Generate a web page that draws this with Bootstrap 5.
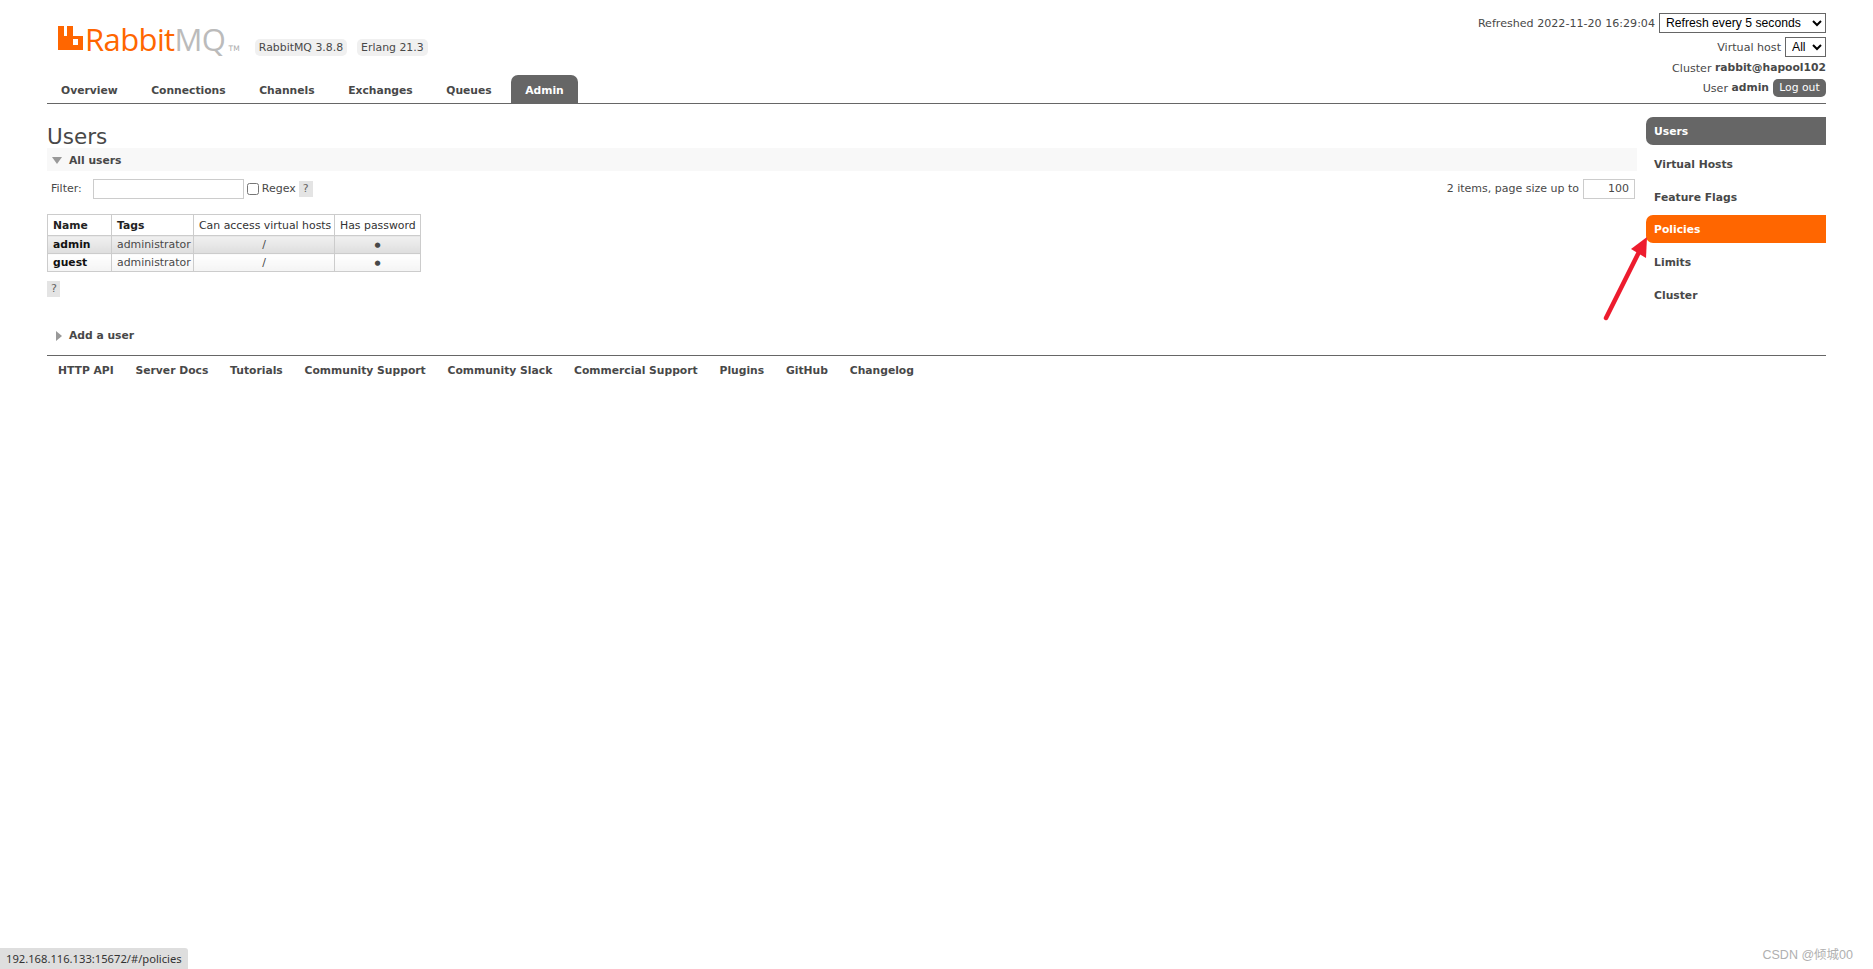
<!DOCTYPE html>
<html lang="en"><head><meta charset="utf-8"><title>RabbitMQ Management</title>
<link rel="stylesheet" href="https://cdn.jsdelivr.net/npm/bootstrap@5.3.0/dist/css/bootstrap.min.css">
<style>
html,body{height:100%}
body{font-family:"DejaVu Sans",Verdana,sans-serif;font-size:11.2px;color:#484848;background:#fff;position:relative;overflow:hidden;line-height:1.2}
a{color:inherit;text-decoration:none}
.page-wrap{padding:0 47px}
.hdr{height:104px;border-bottom:1px solid #666}
.logo-row{padding:26px 0 0 11px;height:75px}
.logo-text{font-family:"Open Sans","Liberation Sans",sans-serif;font-weight:400;font-size:31px;line-height:26px;letter-spacing:-.6px;color:#f60;margin-left:2px}
.logo-text i{font-style:normal;color:#bbb}
.logo-tm{font-size:7.5px;color:#aaa;margin:18px 15px 0 3px;letter-spacing:.2px}
.ver{background:#f0f0f0;border-radius:5px;padding:0 4px;height:17px;line-height:17px;margin:13px 10px 0 0;white-space:nowrap;font-size:10.9px}
.tabs{gap:5.5px;height:28px}
.tabs a{font-weight:700;padding:0 14px;line-height:31px;height:28px;border-radius:7px 7px 0 0;font-size:10.75px}
.tabs a.on{background:#666;color:#fff}
.hdr-r{padding-top:13px;text-align:right;font-size:11.1px}
.hdr-r>div{display:flex;justify-content:flex-end;align-items:center}
.hdr-r b{font-size:10.75px}
.lb{padding-top:2px}
.sel{font-family:"Liberation Sans",sans-serif;font-size:12.2px;color:#000;border:1px solid #666;background:#fff;height:20px;padding:0 0 0 2px;margin-left:3px;border-radius:0}
.sel-a{width:167px}
.sel-b{width:41px}
.row-cl{margin-top:5px}
.lo{background:#666;color:#fff;border:0;border-radius:5px;height:18px;width:53px;margin-left:4px;padding:0;font-size:10.8px;font-family:inherit}
.bdy{gap:9px;padding-top:13px}
.mainc{width:1591px}
.side{width:180px;padding:0;list-style:none;margin:0;height:1px}
.side a{display:block;height:28px;line-height:30px;padding-left:8px;font-weight:700;border-radius:7px 0 0 7px;margin-bottom:4.8px;font-size:10.75px}
.side a.cur{background:#666;color:#fff}
.side a.hl{background:#f60;color:#fff}
h1.ttl{font-size:21.5px;font-weight:400;margin:9px 0 0;line-height:22px;height:22px;color:#484848}
.sec{background:#f8f8f8;height:23px;margin-top:0;font-weight:700;padding:2px 0 0 5px;font-size:10.75px;line-height:20px;gap:7px}
.sec-plain{background:none;margin-top:26px;gap:0}
.tri-d{width:0;height:0;border:5px solid transparent;border-top:7px solid #999;border-bottom:0}
.tri-r{width:0;height:0;border:5px solid transparent;border-left:6px solid #999;border-right:0;margin-left:4px;margin-right:7px}
.flt{padding:8px 2px 0 4px;height:43px;font-size:11px}
.inp{border:1px solid #ccc;height:20px;background:#fff}
.inp-a{width:151px;margin:0 3px 0 11px}
.inp-b{width:52px;margin-left:4px;text-align:right;padding-right:5px;line-height:18px;font-size:11px}
.chk{width:12px;height:12px;border:1px solid #767676;border-radius:2.5px;margin-right:3px}
.hlp{background:#e4e4e4;color:#666;padding:0 4px;height:16px;line-height:16px;display:inline-block;margin-left:3px}
.hlp-b{margin-left:0;width:13px}
.tbl-u{border-collapse:collapse;width:373px;table-layout:fixed;font-size:10.9px;margin-bottom:9px}
.tbl-u th,.tbl-u td{border:1px solid #ccc;padding:1px 5px 0;white-space:nowrap;line-height:16px}
.tbl-u th{font-weight:400;height:21px;color:#333}
.tbl-u th.b{font-weight:700;color:#222;font-size:10.75px}
.tbl-u td{height:18px}
.tbl-u td.n{font-weight:700;color:#111;font-size:10.75px}
.tbl-u td.dot{font-size:7px}
.c1{width:64px}.c2{width:82px}.c3{width:141px}.c4{width:86px}
.r1 td{background:linear-gradient(#f0f0f0,#dedede)}
.r2 td{background:linear-gradient(#fff,#f4f4f4)}
.ftr{border-top:1px solid #666;margin-top:9px;padding:9px 0 0 11px;gap:21.8px;font-weight:700;font-size:10.75px}
.arrow{position:absolute;left:1590px;top:225px;width:70px;height:100px;pointer-events:none}
.stat{position:absolute;left:0;bottom:0;width:188px;height:21px;background:#dedede;border-radius:0 3px 0 0;font-family:"Noto Sans",sans-serif;font-size:11.2px;line-height:21px;padding-left:6px;color:#333;white-space:nowrap}
.wm{position:absolute;right:20px;bottom:6px;font-family:"Liberation Sans","Noto Sans CJK SC",sans-serif;font-size:12.5px;color:#b0b0b0;white-space:nowrap}
</style></head><body>
<div class="page-wrap">
<header class="hdr d-flex justify-content-between">
 <div>
  <div class="logo-row d-flex align-items-start">
   <svg width="25" height="24" viewBox="0 0 25 24" class="flex-shrink-0"><path fill="#f60" fill-rule="evenodd" d="M0 0h6v10h3V0h6v10h10v14H0zM15 13v6h5v-6z"/></svg>
   <span class="logo-text">Rabbit<i>MQ</i></span><span class="logo-tm">TM</span>
   <span class="ver">RabbitMQ 3.8.8</span><span class="ver">Erlang 21.3</span>
  </div>
  <nav class="tabs d-flex">
   <a href="#">Overview</a><a href="#">Connections</a><a href="#">Channels</a><a href="#">Exchanges</a><a href="#">Queues</a><a href="#" class="on">Admin</a>
  </nav>
 </div>
 <div class="hdr-r">
  <div><span class="lb">Refreshed 2022-11-20 16:29:04</span><select class="sel sel-a ms-1"><option>Refresh every 5 seconds</option></select></div>
  <div class="mt-1"><span class="lb">Virtual host</span><select class="sel sel-b ms-1"><option>All</option></select></div>
  <div class="row-cl">Cluster&nbsp;<b>rabbit@hapool102</b></div>
  <div class="mt-1">User&nbsp;<b>admin</b><button class="lo">Log out</button></div>
 </div>
</header>
<div class="bdy d-flex">
 <main class="mainc">
  <h1 class="ttl">Users</h1>
  <div class="sec d-flex align-items-center"><span class="tri-d"></span>All users</div>
  <div class="flt d-flex justify-content-between align-items-start">
   <div class="d-flex align-items-center">Filter:<span class="inp inp-a"></span><span class="chk"></span>Regex<span class="hlp">?</span></div>
   <div class="d-flex align-items-center">2 items, page size up to<span class="inp inp-b">100</span></div>
  </div>
  <table class="tbl-u">
   <colgroup><col class="c1"><col class="c2"><col class="c3"><col class="c4"></colgroup>
   <thead><tr><th class="b">Name</th><th class="b">Tags</th><th>Can access virtual hosts</th><th>Has password</th></tr></thead>
   <tbody>
    <tr class="r1"><td class="n">admin</td><td>administrator</td><td class="text-center">/</td><td class="text-center dot">●</td></tr>
    <tr class="r2"><td class="n">guest</td><td>administrator</td><td class="text-center">/</td><td class="text-center dot">●</td></tr>
   </tbody>
  </table>
  <span class="hlp hlp-b d-block">?</span>
  <div class="sec sec-plain d-flex align-items-center"><span class="tri-r"></span>Add a user</div>
 </main>
 <nav class="side">
  <a href="#" class="cur">Users</a><a href="#">Virtual Hosts</a><a href="#">Feature Flags</a><a href="#" class="hl">Policies</a><a href="#">Limits</a><a href="#">Cluster</a>
 </nav>
</div>
<footer class="ftr d-flex">
 <a href="#">HTTP API</a><a href="#">Server Docs</a><a href="#">Tutorials</a><a href="#">Community Support</a><a href="#">Community Slack</a><a href="#">Commercial Support</a><a href="#">Plugins</a><a href="#">GitHub</a><a href="#">Changelog</a>
</footer>
</div>
<svg class="arrow" viewBox="1590 225 70 100"><path d="M1606 318L1640 250" stroke="#ed1c2e" stroke-width="4.5" stroke-linecap="round" fill="none"/><path fill="#ed1c2e" d="M1647 237L1646 258L1631 249z"/></svg>
<div class="stat">192.168.116.133:15672/#/policies</div>
<div class="wm">CSDN @倾城00</div>
</body></html>
